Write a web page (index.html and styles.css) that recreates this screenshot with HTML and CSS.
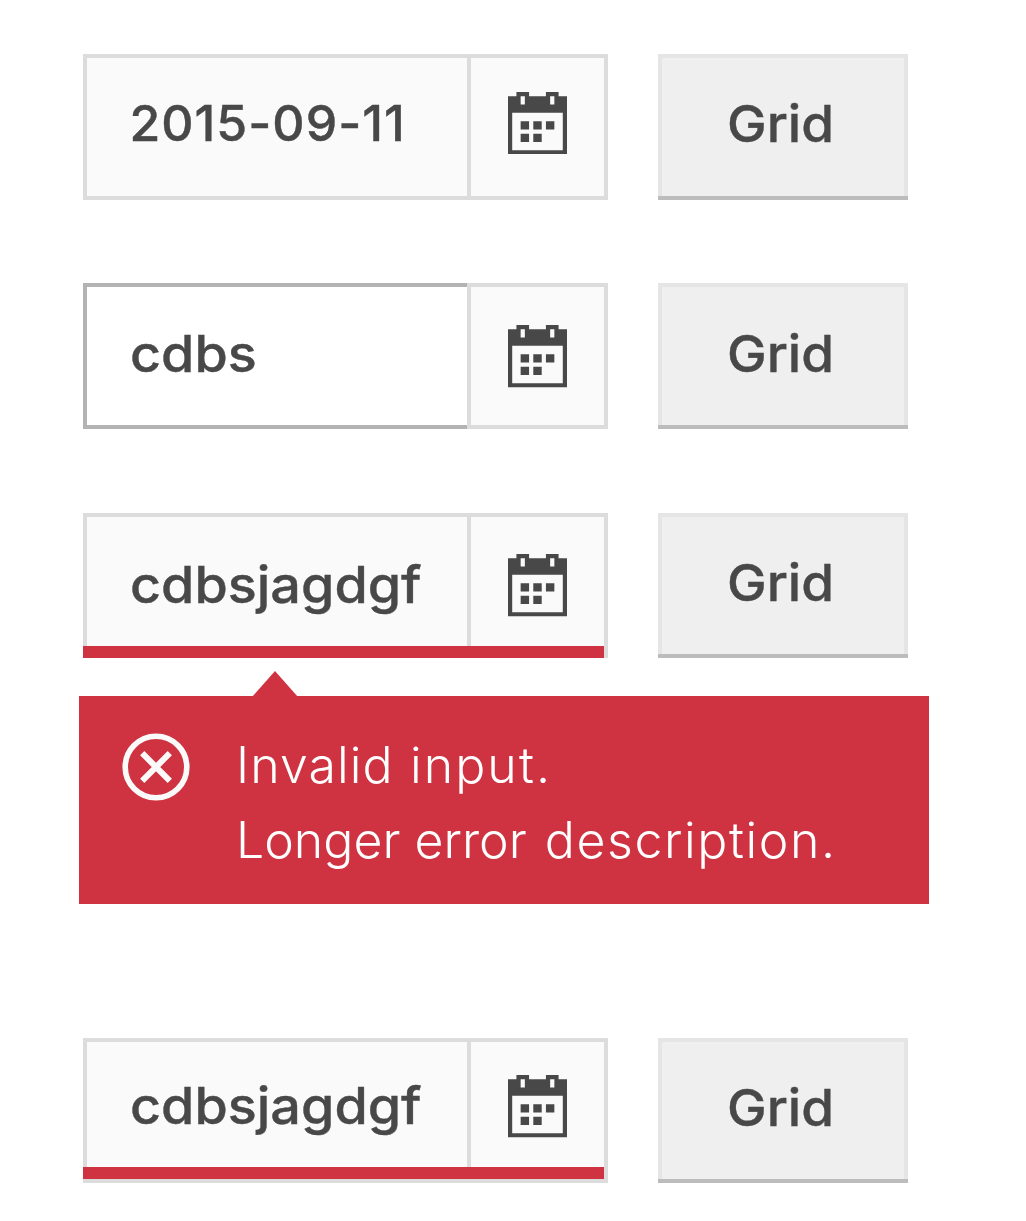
FILE: index.html
```html
<!DOCTYPE html>
<html lang="en">
<head>
<meta charset="utf-8">
<title>Date field states</title>
<link rel="stylesheet" href="styles.css">
</head>
<body>
<svg class="defs" width="0" height="0" aria-hidden="true">
  <symbol id="calendar" viewBox="0 0 14 15" preserveAspectRatio="none">
    <path fill="#484848" fill-rule="evenodd" d="M0 1H2V0H5V1H9V0H12V1H14V15H0ZM1 5V14H13V5ZM3 1V3H4V1ZM10 1V3H11V1ZM3 7H5V9H3ZM6 7H8V9H6ZM9 7H11V9H9ZM3 10H5V12H3ZM6 10H8V12H6Z"/>
  </symbol>
</svg>
<main class="form">
  <div class="row row-default">
    <div class="field">
      <div class="value"><span class="label digits">2015-09-11</span></div>
      <div class="picker"><svg class="calendar"><use href="#calendar"/></svg></div>
    </div>
    <div class="button"><span class="label">Grid</span></div>
  </div>
  <div class="row row-focus">
    <div class="field">
      <div class="value"><span class="label">cdbs</span></div>
      <div class="picker"><svg class="calendar"><use href="#calendar"/></svg></div>
    </div>
    <div class="button"><span class="label">Grid</span></div>
  </div>
  <div class="row row-error">
    <div class="field">
      <div class="value"><span class="label">cdbsjagdgf</span></div>
      <div class="picker"><svg class="calendar"><use href="#calendar"/></svg></div>
    </div>
    <div class="button"><span class="label">Grid</span></div>
  </div>
  <div class="message">
    <svg class="message-icon" viewBox="0 0 68 68"><circle cx="34" cy="34" r="30.8" fill="none" stroke="#fafafa" stroke-width="5.6"/><path d="M20.2 20.2L47.8 47.8M47.8 20.2L20.2 47.8" stroke="#fafafa" stroke-width="6"/></svg>
    <div class="message-text">
      <div><span class="normal">Invalid </span><span class="loose">input.</span></div>
      <div>Longer error <span class="wide">description.</span></div>
    </div>
  </div>
  <div class="row row-marked">
    <div class="field">
      <div class="value"><span class="label">cdbsjagdgf</span></div>
      <div class="picker"><svg class="calendar"><use href="#calendar"/></svg></div>
    </div>
    <div class="button"><span class="label">Grid</span></div>
  </div>
</main>
</body>
</html>
```

FILE: styles.css
```css
* { box-sizing: border-box; }
body {
  margin: 0;
  background: #fff;
  color: #484848;
  font: 500 50px/60px Inter, "Liberation Sans", sans-serif;
}
.defs { position: absolute; }
.form {
  display: flow-root;
  width: 1026px;
  height: 1221px;
  padding-top: 54px;
}
.row {
  display: flex;
  gap: 50px;
  height: 146px;
  margin-left: 83px;
}
.field {
  position: relative;
  display: flex;
  width: 525px;
}
.label {
  display: block;
  width: max-content;
  font-size: 51px;
  transform: scaleX(1.057);
  transform-origin: 0 0;
  -webkit-text-stroke: 0.4px #484848;
}
.button .label { transform: scaleX(1.04); }
.value .digits {
  font-size: 50px;
  letter-spacing: 1px;
  transform: none;
}
.value {
  width: 384px;
  padding: var(--text-top) 0 0 42.5px;
  border: 4px solid #dcdcdc;
  border-right: 0;
  background: #fafafa;
  white-space: nowrap;
}
.picker {
  width: 141px;
  padding: var(--icon-top) 0 0 37.3px;
  border: 4px solid #dcdcdc;
  background: #fafafa;
}
.calendar {
  display: block;
  width: 59px;
  height: 62.5px;
}
.button {
  position: relative;
  width: 250px;
  padding: var(--button-top) 0 0 64.5px;
  border: 4px solid #e5e5e5;
  border-bottom: 0;
  background: #efefef;
}
.button::after {
  content: "";
  position: absolute;
  left: -4px;
  right: -4px;
  bottom: 0;
  height: 4px;
  background: #bcbcbc;
}
.row-default { --text-top: 35px; --icon-top: 33.7px; --button-top: 36px; }
.row-focus { --text-top: 36.5px; --icon-top: 38px; --button-top: 36.5px; margin-top: 83px; }
.row-focus .value { background: #fff; border-color: #b3b3b3; }
.row-error { --text-top: 37.5px; --icon-top: 37px; --button-top: 35.5px; height: 145px; margin-top: 84px; }
.row-marked { --text-top: 33.5px; --icon-top: 33px; --button-top: 35.5px; height: 145px; margin-top: 134px; }
.row-error .field::after,
.row-marked .field::after {
  content: "";
  position: absolute;
  left: 0;
  right: 4px;
  bottom: 0;
  height: 12.5px;
  background: #cf3341;
}
.row-marked .field::after { bottom: 4px; }
.message {
  position: relative;
  display: flex;
  gap: 46px;
  width: 850px;
  height: 208px;
  margin: 38px 0 0 79px;
  padding: 32px 0 0 43px;
  background: #cf3341;
  color: #fff;
  font-weight: 300;
  line-height: 75px;
  white-space: nowrap;
}
.message::before {
  content: "";
  position: absolute;
  left: 173px;
  top: -25px;
  width: 46px;
  height: 26px;
  background: #cf3341;
  clip-path: polygon(50% 0, 100% 100%, 0 100%);
}
.message-icon {
  width: 68px;
  height: 68px;
  margin-top: 5px;
}
.normal { letter-spacing: 1.1px; }
.loose { margin-left: 1px; letter-spacing: 2.1px; }
.wide { margin-left: 4px; letter-spacing: 1.6px; }
```
